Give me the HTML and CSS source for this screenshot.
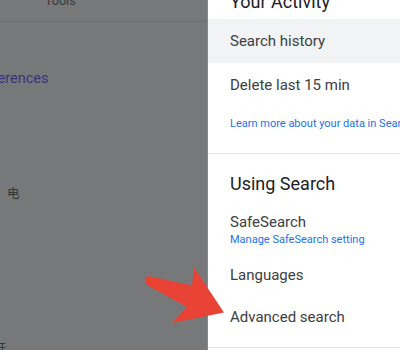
FILE: index.html
```html
<!DOCTYPE html>
<html>
<head>
<meta charset="utf-8">
<link rel="stylesheet" href="styles.css">
</head>
<body>
<div class="page">
  <div class="backdrop">
    <div class="tools-bar"><span class="tools">Tools</span></div>
    <div class="pref">Preferences</div>
    <div class="cjk">电</div>
    <div class="cjk-bottom">开</div>
  </div>
  <div class="panel">
    <div class="heading first">Your Activity</div>
    <div class="row active">Search history</div>
    <div class="row">Delete last 15 min</div>
    <div class="link learn">Learn more about your data in Search</div>
    <div class="divider"></div>
    <div class="heading second">Using Search</div>
    <div class="safe">
      <div class="item">SafeSearch</div>
      <div class="link">Manage SafeSearch setting</div>
    </div>
    <div class="row short">Languages</div>
    <div class="row short">Advanced search</div>
    <div class="divider bottom"></div>
  </div>
  <svg class="arrow" width="90" height="64" viewBox="140 262 90 64">
    <path d="M148,276 L192,285.5 L194,267.5 L224,312.5 L172,323 L187,307 L148,285.5 Q141.5,281 148,276 Z" fill="#e94335"/>
  </svg>
</div>
</body>
</html>
```

FILE: styles.css
```css
html, body {
  margin: 0;
  padding: 0;
}

body {
  font-family: Roboto, "Liberation Sans", sans-serif;
  background: #ffffff;
}

.page {
  position: relative;
  display: flex;
  width: 400px;
  height: 350px;
  overflow: hidden;
}

.backdrop {
  width: 207px;
  flex: none;
  background: #77787a;
  border-right: 1px solid #88898b;
  display: flex;
  flex-direction: column;
  overflow: hidden;
}

.tools-bar {
  height: 21px;
  border-bottom: 1px solid #6d6e70;
  overflow: hidden;
  flex: none;
}

.tools {
  display: block;
  margin-top: -6px;
  padding-left: 45px;
  font-size: 12.5px;
  line-height: 14px;
  color: #38393b;
}

.pref {
  margin-top: 47px;
  text-indent: -29px;
  font-size: 14.5px;
  line-height: 20px;
  color: #3a337a;
  white-space: nowrap;
}

.cjk {
  margin-top: 96px;
  padding-left: 7px;
  font-family: "Noto Sans CJK SC", sans-serif;
  font-size: 12.5px;
  line-height: 16px;
  color: #333436;
}

.cjk-bottom {
  margin-top: 139px;
  text-indent: -6px;
  font-family: "Noto Sans CJK SC", sans-serif;
  font-size: 12px;
  line-height: 16px;
  color: #333436;
}

.panel {
  flex: 1;
  background: #ffffff;
  display: flex;
  flex-direction: column;
  color: #3c4043;
}

.heading {
  padding-left: 22px;
  font-size: 18px;
  line-height: 24px;
  color: #202124;
}

.heading.first {
  margin-top: -10px;
  margin-bottom: 5px;
}

.heading.second {
  margin-top: 18px;
}

.row {
  height: 44px;
  display: flex;
  align-items: center;
  padding-left: 22px;
  font-size: 15px;
  white-space: nowrap;
}

.row.active {
  background: #f1f3f4;
}

.row.short {
  height: 42px;
}

.link {
  padding-left: 22px;
  font-size: 11px;
  line-height: 16px;
  color: #1a73e8;
  white-space: nowrap;
}

.learn {
  margin-top: 9px;
  margin-bottom: 21px;
}

.divider {
  height: 1px;
  background: #e4e4e4;
  flex: none;
}

.divider.bottom {
  margin-top: 9px;
}

.safe {
  padding-top: 16px;
  padding-bottom: 6px;
}

.item {
  padding-left: 22px;
  font-size: 15px;
  line-height: 20px;
}

.safe .link {
  padding-left: 22px;
}

.arrow {
  position: absolute;
  left: 140px;
  top: 262px;
}
```
